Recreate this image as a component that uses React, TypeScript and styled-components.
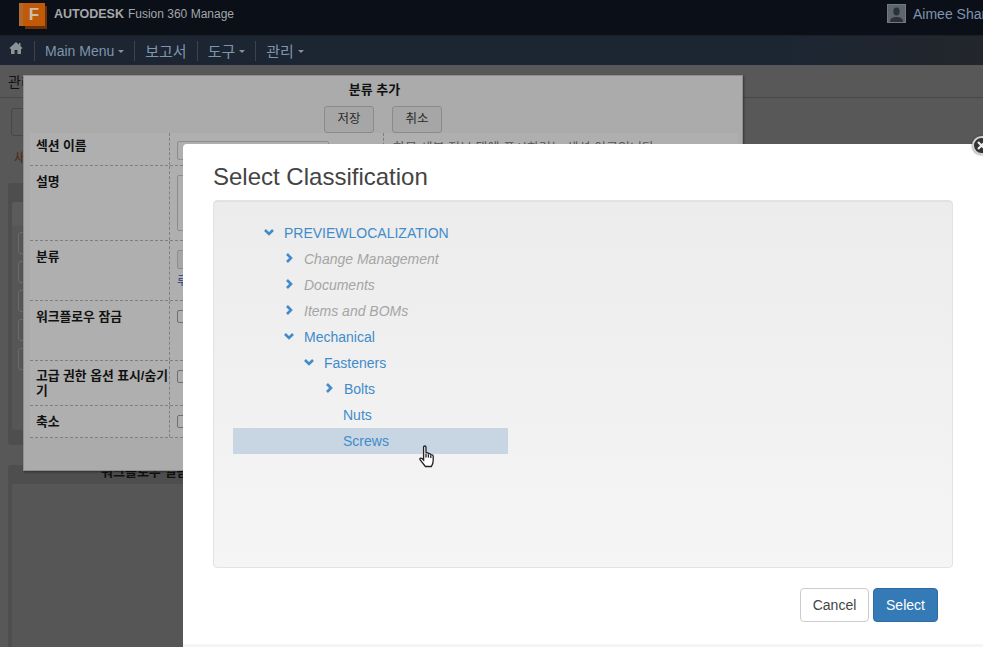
import styled, { createGlobalStyle } from "styled-components";

const KR = `"Liberation Sans", "Noto Sans CJK KR", sans-serif`;

const GlobalStyle = createGlobalStyle`
  html, body { margin: 0; padding: 0; background: #575757; }
  * { box-sizing: border-box; }
`;

const Page = styled.div`
  position: relative;
  width: 983px;
  height: 647px;
  overflow: hidden;
  background: #585858;
  font-family: ${KR};
  font-size: 14px;
`;

/* top bars */
const TopBar = styled.header`
  display: flex;
  align-items: center;
  height: 36px;
  padding-left: 23px;
  background: #0a0f18;
  border-bottom: 1px solid #1c2026;
`;

const Logo = styled.div`
  width: 22px;
  height: 23px;
  margin-top: -7px;
  background: #c05a08;
  box-shadow: -4px 0 0 #b0692c, 2px 3px 0 #6b3008;
  color: #cdbdac;
  font: bold 17px "Liberation Sans", sans-serif;
  line-height: 23px;
  text-align: center;
`;

const Brand = styled.div`
  margin-left: 9px;
  margin-top: -7px;
  color: #a3a6aa;
  font-size: 12px;
  b { color: #a8a8a8; font-size: 12.5px; margin-right: 4px; }
`;

const User = styled.div`
  display: flex;
  flex: none;
  align-items: center;
  gap: 7px;
  width: 96px;
  margin-left: auto;
  margin-top: -8px;
  color: #7e95ad;
  font-size: 14px;
  white-space: nowrap;
`;

const Avatar = styled.div`
  flex: none;
  width: 19px;
  height: 19px;
  border: 1px solid #75797e;
  background: #5c6570;
  line-height: 0;
`;

const NavBar = styled.nav`
  display: flex;
  align-items: center;
  height: 29px;
  background: linear-gradient(90deg, #1c2531 0%, #1c2633 80%, #23262c 100%);
`;

const HomeItem = styled.div`
  width: 35px;
  height: 20px;
  padding-left: 9px;
  border-right: 1px solid #3c434c;
  line-height: 0;
`;

const NavItem = styled.div<{ $korean?: boolean }>`
  display: flex;
  align-items: center;
  gap: 4px;
  height: 20px;
  padding: 0 10px;
  border-right: 1px solid #3c434c;
  color: #7f95ad;
  font-size: ${(p) => (p.$korean ? 15 : 14)}px;

  &:last-child { border-right: 0; }
`;

const Caret = styled.i`
  width: 0;
  height: 0;
  margin-top: 2px;
  border-left: 3px solid transparent;
  border-right: 3px solid transparent;
  border-top: 3px solid #8a9099;
`;

const SubHeader = styled.div`
  height: 33px;
  padding: 6px 8px 0;
  border-bottom: 1px solid #474747;
  color: #111;
  font-size: 14px;
`;

/* page behind the dialogs */
const Content = styled.main`
  padding: 10px 11px 0;
`;

const GhostButton = styled.div`
  width: 40px;
  height: 28px;
  border: 1px solid #474747;
  border-radius: 3px;
`;

const NewLabel = styled.div`
  margin: 11px 0 0 3px;
  height: 36px;
  color: #4a2a12;
  font-size: 13px;
`;

const Panel = styled.section<{ $height: number }>`
  height: ${(p) => p.$height}px;
  margin: 0 0 20px -3px;
  padding: 19px 4px 0;
  border-radius: 3px;
  background: #4e4e4e;
`;

const PanelBody = styled.div<{ $height: number; $header?: boolean }>`
  display: flex;
  flex-direction: column;
  gap: 7px;
  height: ${(p) => p.$height}px;
  padding: 30px 6px 0;
  border-radius: 3px;
  background: ${(p) => (p.$header ? "linear-gradient(#5b5b5b 0 24px, #565656 24px)" : "#565656")};
`;

const GhostField = styled.div`
  width: 30px;
  height: 22px;
  padding-left: 3px;
  border: 1px solid #6a6a66;
  border-radius: 3px;
  color: #746838;
  font-size: 12px;
  line-height: 20px;
  white-space: nowrap;
`;

const PanelCaption = styled.div`
  position: absolute;
  left: 101px;
  top: 461px;
  color: #111;
  font-size: 13px;
  font-weight: bold;
`;

/* 분류 추가 dialog */
const AddDialog = styled.section`
  position: absolute;
  left: 23px;
  top: 75px;
  width: 720px;
  height: 396px;
  padding: 7px 6px 0;
  background: #ababab;
  border: 1px solid #8f8f8f;
  box-shadow: 1px 1px 2px rgba(0, 0, 0, 0.4);
`;

const AddTitle = styled.h2`
  margin: 0;
  padding-right: 17px;
  color: #111;
  font-size: 13px;
  font-weight: bold;
  line-height: 14px;
  text-align: center;
`;

const AddActions = styled.div`
  display: flex;
  justify-content: center;
  gap: 18px;
  margin-top: 9px;
`;

const GreyButton = styled.div`
  width: 50px;
  height: 27px;
  border: 1px solid #8a8a8a;
  border-radius: 3px;
  background: #a6a6a6;
  color: #2a2a2a;
  font-size: 12.5px;
  line-height: 24px;
  text-align: center;
`;

const FormTable = styled.div`
  margin-right: -2px;
  background: #afafaf;
`;

const FormRow = styled.div<{ $height: number }>`
  display: grid;
  grid-template-columns: 140px 214px 1fr;
  height: ${(p) => p.$height}px;
  border-bottom: 1px dashed #7f7f7f;
`;

const LabelCell = styled.div<{ $top: number }>`
  padding: ${(p) => p.$top}px 0 0 6px;
  border-right: 1px dashed #7f7f7f;
  color: #111;
  font-size: 12.8px;
  font-weight: bold;
  line-height: 15px;
`;

const FieldCell = styled.div<{ $top: number }>`
  padding: ${(p) => p.$top}px 7px 0;
  border-right: 1px dashed #7f7f7f;
`;

const HelpCell = styled.div`
  padding: 4px 9px;
  color: #555;
  font-size: 13px;
  white-space: nowrap;
`;

const TextInput = styled.div<{ $height: number; $disabled?: boolean }>`
  width: 152px;
  height: ${(p) => p.$height}px;
  border: 1px solid #8c8c8c;
  border-radius: 2px;
  background: ${(p) => (p.$disabled ? "#a6a6a6" : "transparent")};
`;

const PickLink = styled.div`
  margin-top: 6px;
  color: #27408b;
  font-size: 11px;
  line-height: 13px;
`;

const Check = styled.div`
  width: 13px;
  height: 13px;
  border: 1px solid #6f6f6f;
  border-radius: 2px;
`;

/* Select Classification modal */
const Modal = styled.section`
  position: absolute;
  left: 183px;
  top: 144px;
  width: 820px;
  height: 503px;
  padding: 20px 30px;
  border-bottom: 3px solid #f4f4f4;
  border-radius: 4px 0 0 0;
  background: #fff;
`;

const ModalTitle = styled.h1`
  margin: 0;
  height: 36px;
  color: #444;
  font-size: 24px;
  font-weight: 400;
  line-height: 26px;
`;

const TreeBox = styled.div`
  width: 740px;
  height: 368px;
  padding: 19px 19px;
  border: 1px solid #e3e3e3;
  border-radius: 4px;
  background: linear-gradient(#ececec, #f5f5f5);
  box-shadow: inset 0 1px 1px rgba(0, 0, 0, 0.05);
`;

const TreeRow = styled.div<{ $depth: number; $selected?: boolean; $muted?: boolean }>`
  display: flex;
  align-items: center;
  gap: 10px;
  width: 275px;
  height: 26px;
  padding-left: ${(p) => 31 + p.$depth * 20}px;
  background: ${(p) => (p.$selected ? "#c8d6e4" : "transparent")};
  color: ${(p) => (p.$muted ? "#a5a5a5" : "#428bca")};
  font-size: 14px;
  font-style: ${(p) => (p.$muted ? "italic" : "normal")};
  white-space: nowrap;
`;

const Leaf = styled.span`
  margin-left: 19px;
`;

const Chevron = styled.svg`
  flex: none;
  width: 10px;
  height: 10px;
  margin-top: -2px;
  fill: none;
  stroke: #428bca;
  stroke-width: 2.6;
`;

const ModalActions = styled.div`
  display: flex;
  justify-content: flex-end;
  gap: 4px;
  margin-top: 20px;
  width: 725px;
`;

const CancelButton = styled.button`
  width: 69px;
  height: 34px;
  padding: 0;
  border: 1px solid #ccc;
  border-radius: 4px;
  background: #fff;
  color: #444;
  font: 14px ${KR};
`;

const SelectButton = styled(CancelButton)`
  width: 65px;
  border-color: #2e6da4;
  background: #337ab7;
  color: #fff;
`;

const CloseBadge = styled.div`
  position: absolute;
  left: 972px;
  top: 136px;
  width: 19px;
  height: 19px;
  border: 2px solid #d0d0d0;
  border-radius: 50%;
  background: #333;
  line-height: 0;
  box-shadow: 0 0 2px rgba(0, 0, 0, 0.5);
`;

const HandCursor = styled.svg`
  position: absolute;
  left: 419px;
  top: 445px;
  width: 16px;
  height: 23px;
  fill: #fff;
  stroke: #222;
  stroke-width: 1.3;
`;

type Node = { label: string; depth: number; open?: boolean; muted?: boolean; selected?: boolean; leaf?: boolean };

const tree: Node[] = [
  { label: "PREVIEWLOCALIZATION", depth: 0, open: true },
  { label: "Change Management", depth: 1, muted: true },
  { label: "Documents", depth: 1, muted: true },
  { label: "Items and BOMs", depth: 1, muted: true },
  { label: "Mechanical", depth: 1, open: true },
  { label: "Fasteners", depth: 2, open: true },
  { label: "Bolts", depth: 3 },
  { label: "Nuts", depth: 3, leaf: true },
  { label: "Screws", depth: 3, leaf: true, selected: true },
];

const formRows = [
  { label: "섹션 이름", height: 33, labelTop: 5, fieldTop: 8 },
  { label: "설명", height: 75, labelTop: 8, fieldTop: 9 },
  { label: "분류", height: 60, labelTop: 8, fieldTop: 9 },
  { label: "워크플로우 잠금", height: 60, labelTop: 8, fieldTop: 9 },
  { label: "고급 권한 옵션 표시/숨기기", height: 45, labelTop: 7, fieldTop: 9 },
  { label: "축소", height: 32, labelTop: 8, fieldTop: 9 },
];

function FormField({ index }: { index: number }) {
  if (index === 0) return <TextInput $height={19} />;
  if (index === 1) return <TextInput $height={56} />;
  if (index === 2) {
    return (
      <>
        <TextInput $height={19} $disabled />
        <PickLink>루트 선택</PickLink>
      </>
    );
  }
  return <Check />;
}

export default function App() {
  return (
    <Page>
      <GlobalStyle />
      <TopBar>
        <Logo>F</Logo>
        <Brand>
          <b>AUTODESK</b>Fusion 360 Manage
        </Brand>
        <User>
          <Avatar>
            <svg viewBox="0 0 17 17" width="17" height="17">
              <ellipse cx="8.5" cy="6.5" rx="3.2" ry="4" fill="#2c323a" />
              <path d="M2 17c0-4 3-5 6.5-5s6.5 1 6.5 5z" fill="#2c323a" />
            </svg>
          </Avatar>
          Aimee Shar
        </User>
      </TopBar>
      <NavBar>
        <HomeItem>
          <svg viewBox="0 0 14 14" width="14" height="14">
            <path d="M7 1 0.5 7l.8 1L2 7.4V13h3.6V9h2.8v4H12V7.4l.7.6.8-1L11.5 5.2V2H10v1.8z" fill="#8d9298" />
          </svg>
        </HomeItem>
        <NavItem>
          Main Menu <Caret />
        </NavItem>
        <NavItem $korean>보고서</NavItem>
        <NavItem $korean>
          도구 <Caret />
        </NavItem>
        <NavItem $korean>
          관리 <Caret />
        </NavItem>
      </NavBar>
      <SubHeader>관리</SubHeader>
      <Content>
        <GhostButton />
        <NewLabel>새</NewLabel>
        <Panel $height={262}>
          <PanelBody $height={228} $header>
            <GhostField>항목</GhostField>
            <GhostField>항목</GhostField>
            <GhostField>항목</GhostField>
            <GhostField>항목</GhostField>
            <GhostField>항목</GhostField>
          </PanelBody>
        </Panel>
        <Panel $height={220}>
          <PanelBody $height={200} />
        </Panel>
      </Content>
      <PanelCaption>워크플로우 일람</PanelCaption>

      <AddDialog>
        <AddTitle>분류 추가</AddTitle>
        <AddActions>
          <GreyButton>저장</GreyButton>
          <GreyButton>취소</GreyButton>
        </AddActions>
        <FormTable>
          {formRows.map((row, i) => (
            <FormRow key={row.label} $height={row.height}>
              <LabelCell $top={row.labelTop}>{row.label}</LabelCell>
              <FieldCell $top={row.fieldTop}>
                <FormField index={i} />
              </FieldCell>
              <HelpCell>{i === 0 ? "항목 세부 정보 탭에 표시하려는 섹션 이름입니다" : ""}</HelpCell>
            </FormRow>
          ))}
        </FormTable>
      </AddDialog>

      <Modal>
        <ModalTitle>Select Classification</ModalTitle>
        <TreeBox>
          {tree.map((node) => (
            <TreeRow key={node.label} $depth={node.depth} $muted={node.muted} $selected={node.selected}>
              {!node.leaf && (
                <Chevron viewBox="0 0 10 10">
                  <polyline points={node.open ? "1,3 5,7 9,3" : "3,1 7,5 3,9"} />
                </Chevron>
              )}
              {node.leaf ? <Leaf>{node.label}</Leaf> : <span>{node.label}</span>}
            </TreeRow>
          ))}
        </TreeBox>
        <ModalActions>
          <CancelButton>Cancel</CancelButton>
          <SelectButton>Select</SelectButton>
        </ModalActions>
      </Modal>

      <CloseBadge>
        <svg viewBox="0 0 15 15" width="15" height="15">
          <path d="M4 4l7 7M11 4l-7 7" stroke="#eee" strokeWidth="2.2" />
        </svg>
      </CloseBadge>
      <HandCursor viewBox="0 0 16 23">
        <path d="M4.6 2.2Q4.6 1 5.8 1Q7 1 7 2.2V8.6Q7 7.6 8.2 7.6Q9.4 7.6 9.4 9V9.6Q9.4 8.6 10.6 8.6Q11.8 8.6 11.8 10V10.6Q11.8 9.8 12.9 9.8Q14.2 9.8 14.2 11.2V15.5Q14.2 18.5 12.4 21.5H6.4L1.2 15Q.4 13.6 1.6 13.2Q2.8 12.9 4.6 15Z" />
        <path d="M7 9v3.6M9.4 9.6v3M11.8 10.6v2.4" fill="none" />
      </HandCursor>
    </Page>
  );
}
